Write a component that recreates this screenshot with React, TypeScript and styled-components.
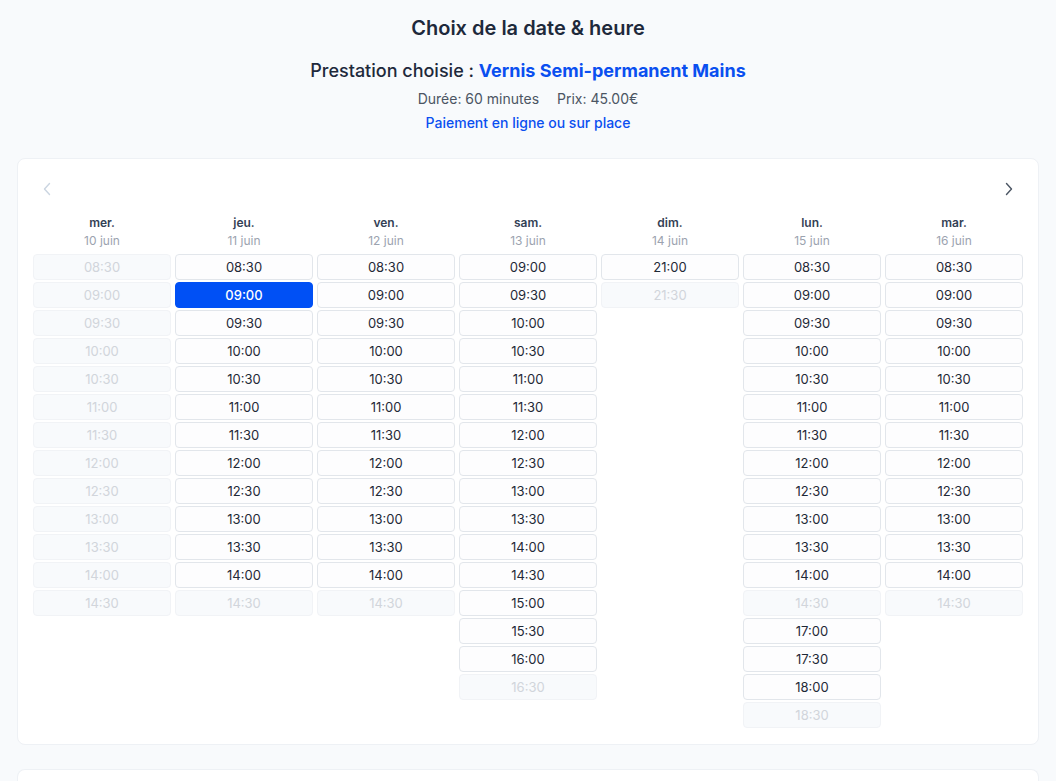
import styled, { createGlobalStyle } from "styled-components"

const GlobalStyle = createGlobalStyle`
  body {
    margin: 0;
    background: #f8fafc;
    font-family: Inter, "Noto Sans", sans-serif;
    color: #1e293b;
  }
`

const StyledPage = styled.main`
  padding: 16px 17px 0 17px;
`

const StyledHeader = styled.header`
  display: flex;
  flex-direction: column;
  align-items: center;
  margin-bottom: 26px;
`

const StyledTitle = styled.h1`
  margin: 0 0 19px 0;
  font-size: 20px;
  line-height: 24px;
  font-weight: 600;
  color: #1e293b;
`

const StyledService = styled.h2`
  margin: 0 0 7px 0;
  font-size: 18px;
  line-height: 24px;
  font-weight: 500;
  color: #1e293b;
`

const StyledServiceName = styled.span`
  color: #0a4ff0;
  font-weight: 700;
`

const StyledMeta = styled.p`
  display: flex;
  gap: 18px;
  margin: 0 0 6px 0;
  font-size: 14px;
  line-height: 18px;
  color: #4b5563;
`

const StyledPayment = styled.p`
  margin: 0;
  font-size: 14px;
  line-height: 18px;
  font-weight: 500;
  color: #0a4ff0;
`

const StyledCard = styled.section`
  background: #fff;
  border: 1px solid #eef1f5;
  border-radius: 8px;
  padding: 16px 15px 16px 15px;
`

const StyledNav = styled.div`
  display: flex;
  justify-content: space-between;
  align-items: center;
  height: 28px;
  padding: 0 6px;
  margin-bottom: 11px;
`

const StyledArrow = styled.button<{ $disabled?: boolean }>`
  display: flex;
  align-items: center;
  justify-content: center;
  width: 16px;
  height: 28px;
  padding: 0;
  border: none;
  background: none;
  color: ${(p) => (p.$disabled ? "#cbd5e1" : "#4b5563")};
`

const StyledGrid = styled.div`
  display: grid;
  grid-template-columns: repeat(7, 138px);
  column-gap: 4px;
  align-items: start;
`

const StyledColumn = styled.div`
  display: flex;
  flex-direction: column;
  gap: 2px;
`

const StyledDayHeader = styled.div`
  display: flex;
  flex-direction: column;
  align-items: center;
  margin-bottom: 2px;
`

const StyledDayName = styled.span`
  font-size: 12px;
  line-height: 18px;
  font-weight: 600;
  color: #334155;
`

const StyledDayDate = styled.span`
  font-size: 12px;
  line-height: 18px;
  color: #9ca3af;
`

const StyledSlot = styled.button<{ $state: "on" | "off" | "selected" }>`
  height: 26px;
  box-sizing: border-box;
  border-radius: 4px;
  font-family: Inter, "Noto Sans", sans-serif;
  font-size: 13px;
  padding: 0;
  border: 1px solid
    ${(p) =>
      p.$state === "selected" ? "#0050f5" : p.$state === "on" ? "#e2e6eb" : "#f1f3f6"};
  background: ${(p) =>
    p.$state === "selected" ? "#0050f5" : p.$state === "on" ? "#fdfdfe" : "#f8fafc"};
  color: ${(p) =>
    p.$state === "selected" ? "#fff" : p.$state === "on" ? "#1f2937" : "#d1d5db"};
  font-weight: ${(p) => (p.$state === "selected" ? 500 : 400)};
`

const StyledNextCard = styled.div`
  margin-top: 24px;
  height: 40px;
  background: #fff;
  border: 1px solid #eef1f5;
  border-bottom: none;
  border-radius: 8px 8px 0 0;
`

type Slot = [string, "on" | "off" | "selected"]

const range = (from: string, to: string, state: "on" | "off" = "on"): Slot[] => {
  const toMin = (t: string) => {
    const [h, m] = t.split(":").map(Number)
    return h * 60 + m
  }
  const out: Slot[] = []
  for (let m = toMin(from); m <= toMin(to); m += 30) {
    const h = String(Math.floor(m / 60)).padStart(2, "0")
    const mm = String(m % 60).padStart(2, "0")
    out.push([`${h}:${mm}`, state])
  }
  return out
}

const days: { name: string; date: string; slots: Slot[] }[] = [
  { name: "mer.", date: "10 juin", slots: range("08:30", "14:30", "off") },
  {
    name: "jeu.",
    date: "11 juin",
    slots: range("08:30", "14:00")
      .map(([t, s]): Slot => [t, t === "09:00" ? "selected" : s])
      .concat([["14:30", "off"]]),
  },
  { name: "ven.", date: "12 juin", slots: [...range("08:30", "14:00"), ["14:30", "off"]] },
  { name: "sam.", date: "13 juin", slots: [...range("09:00", "16:00"), ["16:30", "off"]] },
  { name: "dim.", date: "14 juin", slots: [["21:00", "on"], ["21:30", "off"]] },
  {
    name: "lun.",
    date: "15 juin",
    slots: [
      ...range("08:30", "14:00"),
      ["14:30", "off"],
      ...range("17:00", "18:00"),
      ["18:30", "off"],
    ],
  },
  { name: "mar.", date: "16 juin", slots: [...range("08:30", "14:00"), ["14:30", "off"]] },
]

const Chevron = ({ dir }: { dir: "left" | "right" }) => (
  <svg width="10" height="14" viewBox="0 0 10 14" fill="none">
    <path
      d={dir === "left" ? "M7.5 1.5 L2.5 7 L7.5 12.5" : "M2.5 1.5 L7.5 7 L2.5 12.5"}
      stroke="currentColor"
      strokeWidth="1.4"
      strokeLinecap="round"
      strokeLinejoin="round"
    />
  </svg>
)

export default function App() {
  return (
    <>
      <GlobalStyle />
      <StyledPage>
        <StyledHeader>
          <StyledTitle>Choix de la date &amp; heure</StyledTitle>
          <StyledService>
            Prestation choisie : <StyledServiceName>Vernis Semi-permanent Mains</StyledServiceName>
          </StyledService>
          <StyledMeta>
            <span>Durée: 60 minutes</span>
            <span>Prix: 45.00€</span>
          </StyledMeta>
          <StyledPayment>Paiement en ligne ou sur place</StyledPayment>
        </StyledHeader>

        <StyledCard>
          <StyledNav>
            <StyledArrow $disabled>
              <Chevron dir="left" />
            </StyledArrow>
            <StyledArrow>
              <Chevron dir="right" />
            </StyledArrow>
          </StyledNav>
          <StyledGrid>
            {days.map((day) => (
              <StyledColumn key={day.date}>
                <StyledDayHeader>
                  <StyledDayName>{day.name}</StyledDayName>
                  <StyledDayDate>{day.date}</StyledDayDate>
                </StyledDayHeader>
                {day.slots.map(([time, state]) => (
                  <StyledSlot key={time} $state={state} disabled={state === "off"}>
                    {time}
                  </StyledSlot>
                ))}
              </StyledColumn>
            ))}
          </StyledGrid>
        </StyledCard>

        <StyledNextCard />
      </StyledPage>
    </>
  )
}
